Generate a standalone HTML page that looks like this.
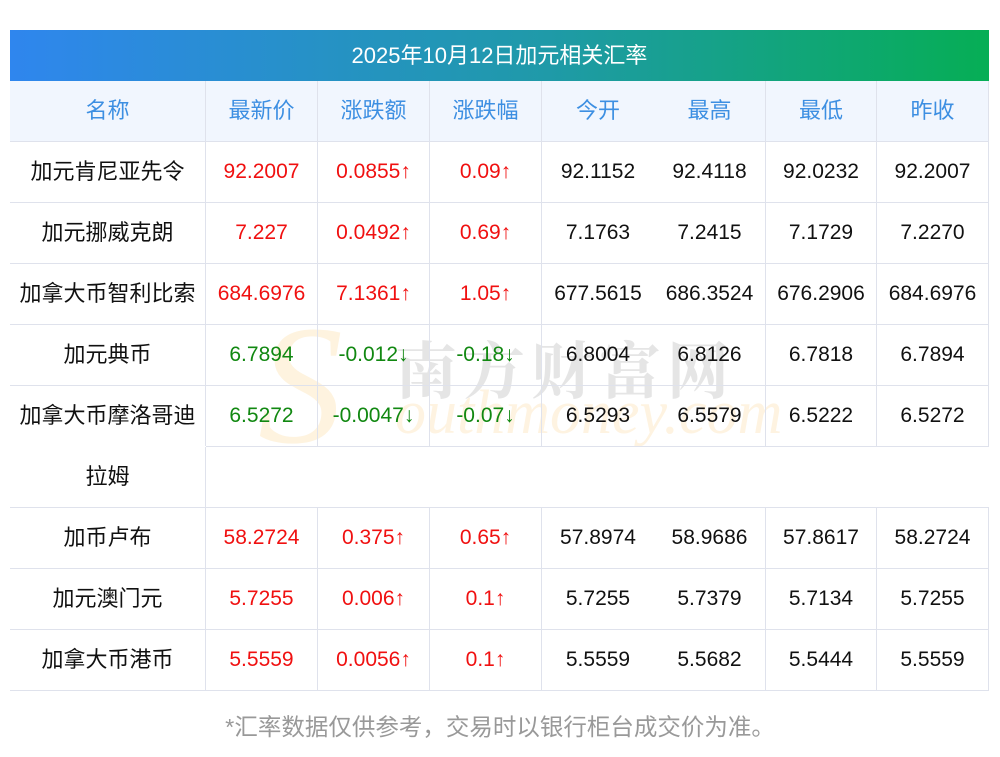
<!DOCTYPE html>
<html><head><meta charset="utf-8"><style>
*{margin:0;padding:0;box-sizing:border-box}
body{width:1000px;height:757px;background:#fff;position:relative;overflow:hidden;font-family:"Liberation Sans","Noto Sans CJK SC",sans-serif;font-size:21px;color:#111}
.title{position:absolute;left:10px;top:30px;width:979px;height:51px;background:linear-gradient(90deg,#2f86ee,#1f9aa8 55%,#06ae55);color:#fff;text-align:center;line-height:51px;font-size:22px}
.row{position:absolute;left:10px;width:979px;height:61px;display:flex;border-bottom:1px solid #dfe2ec;border-right:1px solid #dfe2ec}
.row div{height:60px;line-height:60px;text-align:center;border-right:1px solid #dfe2ec;white-space:nowrap}
.row div:last-child{border-right:none}
.c0{width:196px;font-size:22px}.c1,.c2,.c3{width:112px}.c4{width:112px;border-right:none!important}.c5{width:112px}.c6{width:111px}.c7{width:111px}
.hd{background:#f1f6fe;color:#3d8fe2}
.hd div{font-size:22px}
.r{color:#f01010}.g{color:#118811}
.wm1{position:absolute;left:395px;top:322px;font-size:62px;color:rgba(170,170,170,.3);font-family:"Noto Serif CJK SC",serif;font-weight:bold;letter-spacing:6px}
.wm2{position:absolute;left:395px;top:378px;font-size:62px;color:rgba(253,225,180,.4);font-family:"Liberation Serif",serif;font-style:italic}
.wmS{position:absolute;left:258px;top:300px;font-size:170px;color:rgba(253,215,150,.3);font-family:"Liberation Serif",serif;font-style:italic;line-height:1}
.foot{position:absolute;left:0;width:1000px;top:708px;text-align:center;color:#999;font-size:23.5px}
</style></head><body>
<div class="wmS">S</div>
<div class="wm1">南方财富网</div>
<div class="wm2">outhmoney.com</div>
<div class="title">2025年10月12日加元相关汇率</div>
<div class="row hd" style="top:81px"><div class="c0">名称</div><div class="c1">最新价</div><div class="c2">涨跌额</div><div class="c3">涨跌幅</div><div class="c4">今开</div><div class="c5">最高</div><div class="c6">最低</div><div class="c7">昨收</div></div>
<div class="row" style="top:142px"><div class="c0">加元肯尼亚先令</div><div class="c1 r">92.2007</div><div class="c2 r">0.0855↑</div><div class="c3 r">0.09↑</div><div class="c4">92.1152</div><div class="c5">92.4118</div><div class="c6">92.0232</div><div class="c7">92.2007</div></div>
<div class="row" style="top:203px"><div class="c0">加元挪威克朗</div><div class="c1 r">7.227</div><div class="c2 r">0.0492↑</div><div class="c3 r">0.69↑</div><div class="c4">7.1763</div><div class="c5">7.2415</div><div class="c6">7.1729</div><div class="c7">7.2270</div></div>
<div class="row" style="top:264px"><div class="c0">加拿大币智利比索</div><div class="c1 r">684.6976</div><div class="c2 r">7.1361↑</div><div class="c3 r">1.05↑</div><div class="c4">677.5615</div><div class="c5">686.3524</div><div class="c6">676.2906</div><div class="c7">684.6976</div></div>
<div class="row" style="top:325px"><div class="c0">加元典币</div><div class="c1 g">6.7894</div><div class="c2 g">-0.012↓</div><div class="c3 g">-0.18↓</div><div class="c4">6.8004</div><div class="c5">6.8126</div><div class="c6">6.7818</div><div class="c7">6.7894</div></div>
<div class="row" style="top:386px;border-bottom:none"><div class="c0">加拿大币摩洛哥迪</div><div class="c1 g" style="border-bottom:1px solid #dfe2ec;height:61px">6.5272</div><div class="c2 g" style="border-bottom:1px solid #dfe2ec;height:61px">-0.0047↓</div><div class="c3 g" style="border-bottom:1px solid #dfe2ec;height:61px">-0.07↓</div><div class="c4" style="border-bottom:1px solid #dfe2ec;height:61px">6.5293</div><div class="c5" style="border-bottom:1px solid #dfe2ec;height:61px">6.5579</div><div class="c6" style="border-bottom:1px solid #dfe2ec;height:61px">6.5222</div><div class="c7" style="border-bottom:1px solid #dfe2ec;height:61px">6.5272</div></div>
<div class="row" style="top:447px;border-right:none"><div class="c0">拉姆</div><div style="border:none;width:783px"></div></div>
<div class="row" style="top:508px"><div class="c0">加币卢布</div><div class="c1 r">58.2724</div><div class="c2 r">0.375↑</div><div class="c3 r">0.65↑</div><div class="c4">57.8974</div><div class="c5">58.9686</div><div class="c6">57.8617</div><div class="c7">58.2724</div></div>
<div class="row" style="top:569px"><div class="c0">加元澳门元</div><div class="c1 r">5.7255</div><div class="c2 r">0.006↑</div><div class="c3 r">0.1↑</div><div class="c4">5.7255</div><div class="c5">5.7379</div><div class="c6">5.7134</div><div class="c7">5.7255</div></div>
<div class="row" style="top:630px"><div class="c0">加拿大币港币</div><div class="c1 r">5.5559</div><div class="c2 r">0.0056↑</div><div class="c3 r">0.1↑</div><div class="c4">5.5559</div><div class="c5">5.5682</div><div class="c6">5.5444</div><div class="c7">5.5559</div></div>
<div class="foot">*汇率数据仅供参考，交易时以银行柜台成交价为准。</div>
</body></html>
